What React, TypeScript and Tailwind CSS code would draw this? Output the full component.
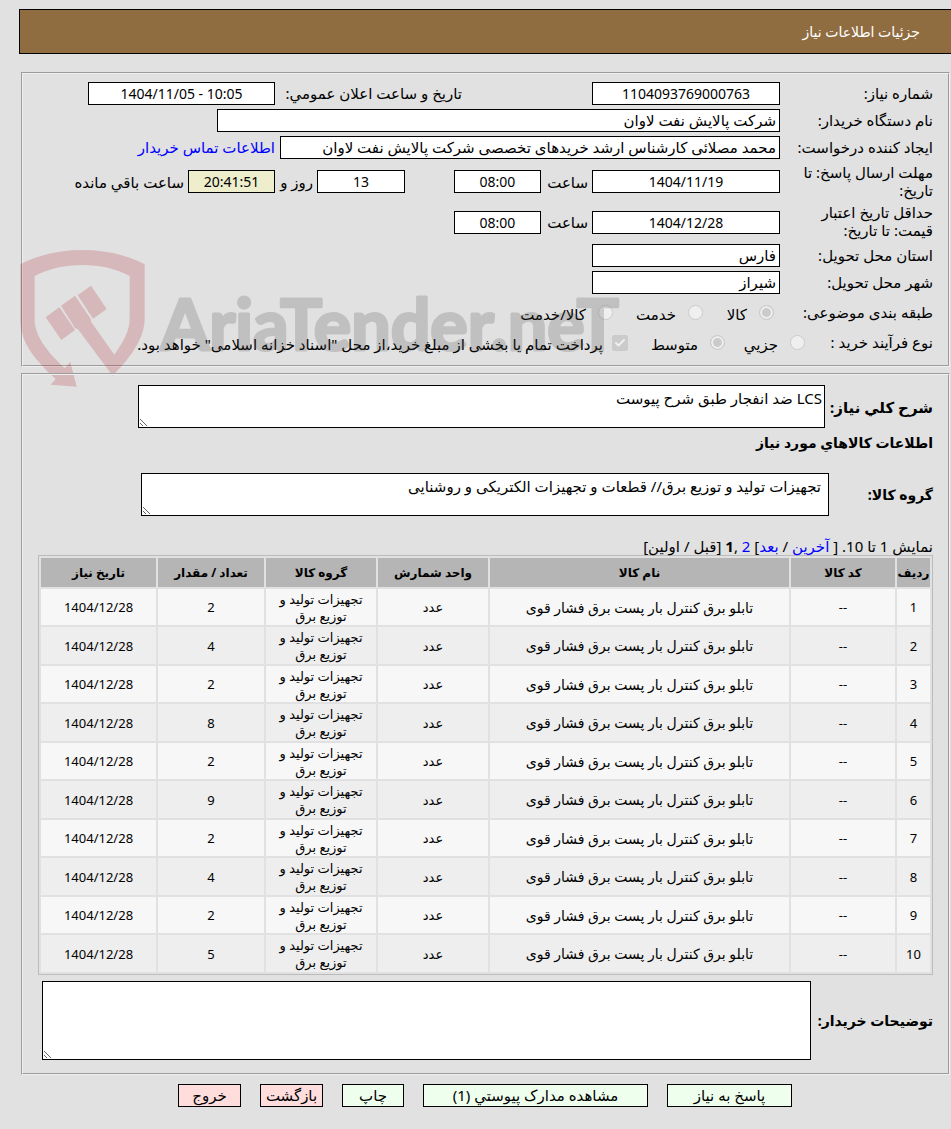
import React from 'react';
import clsx from 'clsx';
import { Check } from 'lucide-react';

const items = [2, 4, 2, 8, 2, 9, 2, 4, 2, 5].map((quantity, index) => ({
  id: index + 1,
  code: '--',
  name: 'تابلو برق کنترل بار پست برق فشار قوی',
  unit: 'عدد',
  group: 'تجهیزات تولید و توزیع برق',
  quantity,
  date: '1404/12/28',
}));

const columns = [
  { title: 'ردیف', width: 'w-[33px]' },
  { title: 'کد کالا', width: 'w-[104px]' },
  { title: 'نام کالا', width: '' },
  { title: 'واحد شمارش', width: 'w-[110px]' },
  { title: 'گروه کالا', width: 'w-[110px]' },
  { title: 'تعداد / مقدار', width: 'w-[106px]' },
  { title: 'تاریخ نیاز', width: 'w-[115px]' },
];

const panel =
  'relative min-w-0 border-2 border-[#f0f0f0] [border-style:groove] px-[15px]';

function Field({
  id,
  value,
  className,
}: {
  id: string;
  value: string;
  className: string;
}) {
  return (
    <input
      id={id}
      readOnly
      defaultValue={value}
      className={clsx(
        'h-[23px] shrink-0 border border-black px-[3px]',
        className
      )}
    />
  );
}

function Row({
  label,
  htmlFor,
  height = 'h-[27px]',
  children,
}: {
  label: React.ReactNode;
  htmlFor?: string;
  height?: string;
  children: React.ReactNode;
}) {
  return (
    <div className={clsx('flex items-center whitespace-nowrap', height)}>
      <label htmlFor={htmlFor} className="w-[153px] shrink-0 pb-0.5 leading-[18px]">
        {label}
      </label>
      {children}
    </div>
  );
}

function Radio({
  name,
  label,
  checked,
  className,
}: {
  name: string;
  label: string;
  checked?: boolean;
  className?: string;
}) {
  return (
    <label className={clsx('flex shrink-0 items-center gap-3', className)}>
      <input
        type="radio"
        name={name}
        disabled
        defaultChecked={checked}
        className="size-[15px] appearance-none rounded-full border border-[#cbcbcb] bg-[#efefef] checked:bg-[#cbcbcb] checked:shadow-[inset_0_0_0_2px_#efefef]"
      />
      <span className="pt-[3px]">{label}</span>
    </label>
  );
}

function Watermark() {
  return (
    <svg
      aria-hidden="true"
      viewBox="60 57 1830 417"
      className="pointer-events-none absolute top-[175px] left-[-3px] h-[139px] w-[610px] opacity-20"
    >
      <g fill="#af1923">
        <path d="M61 103 C120 72 185 60 247 60 C310 60 375 72 434 103 V265 C434 320 400 375 338 437 L234 298 L225 294 L183 227 L225 197 L272 266 L273 275 L343 374 C375 330 389 300 389 265 V138 C345 115 300 105 247 105 C195 105 150 115 104 138 V270 C104 315 140 365 194 414 L211 396 L230 470 L152 464 L167 447 C100 385 61 335 61 270 Z" />
        <path d="M137 262 L178 232 L225 300 L184 330 Z" />
        <path d="M233 196 L273 167 L320 237 L279 266 Z" />
      </g>
      <text
        x="482"
        y="361"
        direction="ltr"
        fill="#404040"
        stroke="#404040"
        strokeWidth="9"
        strokeLinejoin="round"
        fontSize="210"
        fontWeight="bold"
        fontFamily="Lato, sans-serif"
      >
        AriaTender.neT
      </text>
    </svg>
  );
}

function RequestInfo() {
  return (
    <fieldset className={clsx(panel, 'mt-[18px] pt-[6px] pb-[9px]')}>
      <Row label="شماره نیاز:" htmlFor="number">
        <Field
          id="number"
          value="1104093769000763"
          className="w-[188px] bg-white text-center text-sm"
        />
        <label htmlFor="announced" className="ms-[130px] w-[187px] shrink-0 pb-0.5">
          تاریخ و ساعت اعلان عمومي:
        </label>
        <input
          id="announced"
          dir="ltr"
          readOnly
          defaultValue="1404/11/05 - 10:05"
          className="h-[23px] w-[187px] shrink-0 border border-black bg-white text-center text-sm"
        />
      </Row>
      <Row label="نام دستگاه خریدار:" htmlFor="buyer">
        <Field
          id="buyer"
          value="شرکت پالایش نفت لاوان"
          className="w-[563px] bg-white pb-0.5"
        />
      </Row>
      <Row label="ایجاد کننده درخواست:" htmlFor="creator">
        <Field
          id="creator"
          value="محمد مصلائی کارشناس ارشد خریدهای تخصصی شرکت پالایش نفت لاوان"
          className="w-[500px] bg-white pb-0.5"
        />
        <a href="#contact" className="ms-[5px] pb-0.5 text-[#0000ff]">
          اطلاعات تماس خریدار
        </a>
      </Row>
      <Row
        label={
          <>
            مهلت ارسال پاسخ: تا
            <br />
            تاریخ:
          </>
        }
        htmlFor="deadline"
        height="h-[41px]"
      >
        <Field
          id="deadline"
          value="1404/11/19"
          className="w-[188px] bg-white text-center text-sm"
        />
        <label htmlFor="deadline-hour" className="w-[51px] shrink-0 ps-1">
          ساعت
        </label>
        <Field
          id="deadline-hour"
          value="08:00"
          className="w-[87px] bg-white text-center text-sm"
        />
        <Field
          id="days"
          value="13"
          className="ms-[49px] w-[88px] bg-white text-center text-sm"
        />
        <label htmlFor="days" className="w-[42px] shrink-0 ps-1">
          روز و
        </label>
        <Field
          id="remaining"
          value="20:41:51"
          className="w-[87px] bg-[#eeeecc] text-center text-sm"
        />
        <label htmlFor="remaining" className="ps-1">
          ساعت باقي مانده
        </label>
      </Row>
      <Row
        label={
          <>
            حداقل تاریخ اعتبار
            <br />
            قیمت: تا تاریخ:
          </>
        }
        htmlFor="validity"
        height="h-[40px]"
      >
        <Field
          id="validity"
          value="1404/12/28"
          className="w-[188px] bg-white text-center text-sm"
        />
        <label htmlFor="validity-hour" className="w-[51px] shrink-0 ps-1">
          ساعت
        </label>
        <Field
          id="validity-hour"
          value="08:00"
          className="w-[87px] bg-white text-center text-sm"
        />
      </Row>
      <Row label="استان محل تحویل:" htmlFor="province">
        <Field id="province" value="فارس" className="w-[188px] bg-white pb-0.5" />
      </Row>
      <Row label="شهر محل تحویل:" htmlFor="city">
        <Field id="city" value="شیراز" className="w-[188px] bg-white pb-0.5" />
      </Row>
      <Row label="طبقه بندی موضوعی:" height="h-[33px]">
        <Radio name="category" label="کالا" checked className="ms-[6px] w-[71px]" />
        <Radio name="category" label="خدمت" className="w-[90px]" />
        <Radio name="category" label="کالا/خدمت" />
      </Row>
      <Row label="نوع فرآیند خرید :">
        <Radio name="process" label="جزیي" className="-ms-[25px] w-[80px]" />
        <Radio name="process" label="متوسط" checked className="w-[97px]" />
        <label className="flex items-center gap-[9px]">
          <span className="relative flex">
            <input
              type="checkbox"
              disabled
              defaultChecked
              className="size-4 appearance-none rounded-xs bg-[#cbcbcb]"
            />
            <Check className="absolute inset-0.5 text-[#efefef]" size={12} strokeWidth={4} />
          </span>
          <span className="pt-[3px]">
            پرداخت تمام یا بخشی از مبلغ خرید،از محل "اسناد خزانه اسلامی" خواهد بود.
          </span>
        </label>
      </Row>
      <Watermark />
    </fieldset>
  );
}

function ItemsTable() {
  return (
    <table className="w-full table-fixed border-separate border-spacing-[2px] border border-[#bbbbbb] text-center text-[13px] leading-[17px]">
      <thead>
        <tr className="h-[29px] bg-[#b5b5b5] text-xs">
          {columns.map((column) => (
            <th key={column.title} className={clsx('whitespace-nowrap', column.width)}>
              {column.title}
            </th>
          ))}
        </tr>
      </thead>
      <tbody>
        {items.map((item) => (
          <tr
            key={item.id}
            className="h-[36px] odd:bg-[#f7f7f7] even:h-[37px] even:bg-[#eeeeee]"
          >
            <td className="pt-px">{item.id}</td>
            <td className="pt-px">{item.code}</td>
            <td className="text-sm leading-[17px]">{item.name}</td>
            <td className="pt-px">{item.unit}</td>
            <td className="px-2 pt-px">{item.group}</td>
            <td className="pt-px">{item.quantity}</td>
            <td className="pt-px">{item.date}</td>
          </tr>
        ))}
      </tbody>
    </table>
  );
}

function GoodsInfo() {
  return (
    <fieldset className={clsx(panel, 'mt-[6px] pt-[10px] pb-[13px]')}>
      <div className="flex items-center">
        <label htmlFor="summary" className="w-[108px] shrink-0 font-bold">
          شرح کلي نیاز:
        </label>
        <textarea
          id="summary"
          readOnly
          defaultValue="LCS ضد انفجار طبق شرح پیوست"
          className="me-[100px] h-[43px] flex-1 border border-black bg-white px-0.5 py-0.5"
        />
      </div>
      <h2 className="mt-[5px] text-sm leading-5 font-bold">اطلاعات کالاهاي مورد نیاز</h2>
      <div className="mt-[20px] flex items-center">
        <label htmlFor="group" className="w-[104px] shrink-0 text-sm font-bold">
          گروه کالا:
        </label>
        <textarea
          id="group"
          readOnly
          defaultValue="تجهیزات تولید و توزیع برق// قطعات و تجهیزات الکتریکی و روشنایی"
          className="me-[103px] h-[43px] flex-1 border border-black bg-white px-[7px] py-0.5"
        />
      </div>
      <div className="mt-[20px] -mb-px">
        نمایش 1 تا 10. [{' '}
        <a href="#last" className="text-[#0000ff]">
          آخرین
        </a>{' '}
        /{' '}
        <a href="#next" className="text-[#0000ff]">
          بعد
        </a>
        ]{' '}
        <a href="#2" className="text-[#0000ff]">
          2
        </a>{' '}
        ,<b>1</b> [قبل / اولین]
      </div>
      <ItemsTable />
      <div className="mt-[6px] flex items-center">
        <label
          htmlFor="notes"
          className="w-[122px] shrink-0 text-sm font-bold whitespace-nowrap"
        >
          توضیحات خریدار:
        </label>
        <textarea
          id="notes"
          readOnly
          className="me-1 h-[79px] flex-1 border border-black bg-white"
        />
      </div>
    </fieldset>
  );
}

export default function App() {
  return (
    <div
      dir="rtl"
      className="min-h-screen bg-[#e1e1e1] pt-[9px] font-['Noto_Sans','DejaVu_Sans',sans-serif] text-[15px] leading-5 text-black"
    >
      <header className="ml-[19px] flex h-[45px] items-center border-y border-l border-black bg-[#8f6d40] pr-[31px] text-sm text-white">
        <h1>جزئیات اطلاعات نیاز</h1>
      </header>
      <main className="mr-px ml-[21px]">
        <RequestInfo />
        <GoodsInfo />
        <div className="mt-[9px] flex justify-center gap-[19px] pr-px whitespace-nowrap *:h-[23px] *:border *:border-black *:leading-none">
          <button className="w-[125px] bg-[#eeffee]">پاسخ به نیاز</button>
          <button className="w-[225px] bg-[#eeffee]">مشاهده مدارک پیوستي (1)</button>
          <button className="w-[62px] bg-[#eeffee]">چاپ</button>
          <button className="w-[63px] bg-[#ffdddd]">بازگشت</button>
          <button className="w-[63px] bg-[#ffdddd]">خروج</button>
        </div>
      </main>
    </div>
  );
}
